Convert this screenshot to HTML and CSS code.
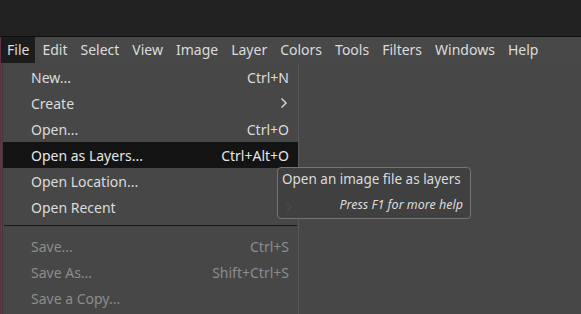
FILE: index.html
```html
<!DOCTYPE html>
<html lang="en">
<head>
    <meta charset="UTF-8">
    <title>GIMP - File menu</title>
    <link rel="stylesheet" href="styles.css">
</head>
<body>
    <div class="titlebar"></div>
    <div class="app">
        <div class="menubar">
            <span class="menubar-item active">File</span>
            <span class="menubar-item">Edit</span>
            <span class="menubar-item">Select</span>
            <span class="menubar-item">View</span>
            <span class="menubar-item">Image</span>
            <span class="menubar-item">Layer</span>
            <span class="menubar-item">Colors</span>
            <span class="menubar-item">Tools</span>
            <span class="menubar-item">Filters</span>
            <span class="menubar-item">Windows</span>
            <span class="menubar-item">Help</span>
        </div>
        <div class="workspace">
            <div class="menu">
                <div class="menu-item"><span>New...</span><span class="accel">Ctrl+N</span></div>
                <div class="menu-item"><span>Create</span>
                    <svg class="arrow" width="8" height="12" viewBox="0 0 8 12"><polyline points="1.5,1.5 6,6 1.5,10.5" fill="none" stroke="#dcdcdc" stroke-width="1.4"/></svg>
                </div>
                <div class="menu-item"><span>Open...</span><span class="accel">Ctrl+O</span></div>
                <div class="menu-item hover"><span>Open as Layers...</span><span class="accel">Ctrl+Alt+O</span></div>
                <div class="menu-item"><span>Open Location...</span></div>
                <div class="menu-item"><span>Open Recent</span></div>
                <div class="separator"></div>
                <div class="menu-item disabled"><span>Save...</span><span class="accel">Ctrl+S</span></div>
                <div class="menu-item disabled"><span>Save As...</span><span class="accel">Shift+Ctrl+S</span></div>
                <div class="menu-item disabled"><span>Save a Copy...</span></div>
            </div>
            <div class="tooltip">
                <div class="tip-text">Open an image file as layers</div>
                <div class="tip-help">Press F1 for more help</div>
                <svg class="tip-arrow" width="8" height="12" viewBox="0 0 8 12"><polyline points="1.5,1.5 6,6 1.5,10.5" fill="none" stroke="#4a4a4a" stroke-width="1.4"/></svg>
            </div>
        </div>
    </div>
</body>
</html>
```

FILE: styles.css
```css
body {
    margin: 0;
    background: #474747;
    font-family: "Noto Sans", "Open Sans", sans-serif;
    font-size: 14px;
    color: #dcdcdc;
    height: 314px;
    overflow: hidden;
}
.titlebar {
    height: 36px;
    background: #222222;
    border-bottom: 1px solid #0e0e0e;
}
.app {
    border-left: 1px solid #5a3446;
    height: 277px;
}
.menubar {
    display: flex;
    gap: 1px;
    height: 26px;
    line-height: 25px;
    background: #484848;
}
.menubar-item {
    padding: 0 6px;
}
.menubar-item.active {
    background: #1c1c1c;
}
.workspace {
    position: relative;
}
.menu {
    width: 295px;
    margin-left: 1px;
    background: #474747;
    border-right: 1px solid #575757;
    border-left: 1px solid #3c3c3c;
    padding-top: 1px;
    height: 260px;
}
.menu-item {
    display: flex;
    justify-content: space-between;
    align-items: center;
    height: 26px;
    padding: 0 9px 0 28px;
}
.menu-item.hover {
    background: #141414;
    color: #e6e6e6;
}
.menu-item.disabled {
    color: #8c8c8c;
}
.arrow {
    margin-right: 1px;
}
.separator {
    height: 1px;
    background: #1a1a1a;
    margin: 5px 1px 7px 1px;
}
.tooltip {
    position: absolute;
    left: 276px;
    top: 104px;
    width: 192px;
    height: 50px;
    border: 1px solid #747474;
    border-radius: 4px;
    background: rgba(64, 64, 64, 0.93);
    white-space: nowrap;
}
.tip-text {
    padding: 1px 0 0 4px;
    font-size: 13.5px;
    line-height: 20px;
}
.tip-help {
    font-style: italic;
    font-size: 12.5px;
    text-align: right;
    padding-right: 7px;
    margin-top: 8px;
    line-height: 16px;
}
.tip-arrow {
    position: absolute;
    left: 7px;
    top: 33px;
}
```
